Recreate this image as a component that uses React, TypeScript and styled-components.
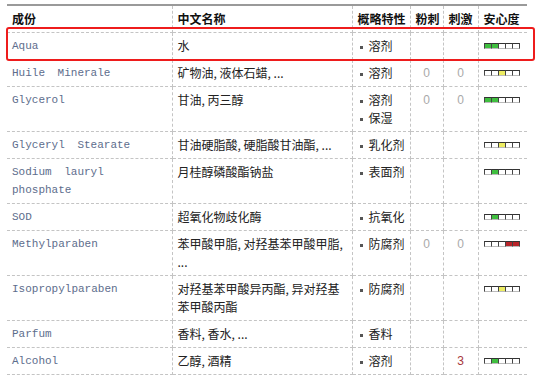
import React from "react";
import styled, { createGlobalStyle } from "styled-components";

const GlobalStyle = createGlobalStyle`
  body {
    margin: 0;
    background: #ffffff;
  }
`;

type Row = {
  en: string[];
  zh: string[];
  props: string[];
  acne: string;
  irr: string;
  safe: string;
};

const rows: Row[] = [
  { en: ["Aqua"], zh: ["水"], props: ["溶剂"], acne: "", irr: "", safe: "gg___" },
  { en: ["Huile Minerale"], zh: ["矿物油, 液体石蜡, ..."], props: ["溶剂"], acne: "0", irr: "0", safe: "__y__" },
  { en: ["Glycerol"], zh: ["甘油, 丙三醇"], props: ["溶剂", "保湿"], acne: "0", irr: "0", safe: "gg___" },
  { en: ["Glyceryl Stearate"], zh: ["甘油硬脂酸, 硬脂酸甘油酯, ..."], props: ["乳化剂"], acne: "", irr: "", safe: "__y__" },
  { en: ["Sodium lauryl", "phosphate"], zh: ["月桂醇磷酸酯钠盐"], props: ["表面剂"], acne: "", irr: "", safe: "_g___" },
  { en: ["SOD"], zh: ["超氧化物歧化酶"], props: ["抗氧化"], acne: "", irr: "", safe: "_g___" },
  { en: ["Methylparaben"], zh: ["苯甲酸甲脂, 对羟基苯甲酸甲脂,", "..."], props: ["防腐剂"], acne: "0", irr: "0", safe: "___rr" },
  { en: ["Isopropylparaben"], zh: ["对羟基苯甲酸异丙酯, 异对羟基", "苯甲酸丙酯"], props: ["防腐剂"], acne: "", irr: "", safe: "__y__" },
  { en: ["Parfum"], zh: ["香料, 香水, ..."], props: ["香料"], acne: "", irr: "", safe: "" },
  { en: ["Alcohol"], zh: ["乙醇, 酒精"], props: ["溶剂"], acne: "", irr: "3", safe: "_g___" },
];

const fills: Record<string, string> = {
  g: "#3fbf3f",
  y: "#eded62",
  r: "#b8242a",
  _: "#ffffff",
};

export default function App() {
  return (
    <Page>
      <GlobalStyle />
      <Table>
        <colgroup>
          <col style={{ width: 165 }} />
          <col style={{ width: 180 }} />
          <col style={{ width: 58 }} />
          <col style={{ width: 33 }} />
          <col style={{ width: 35 }} />
          <col style={{ width: 49 }} />
        </colgroup>
        <thead>
          <tr>
            <Th>成份</Th>
            <Th>中文名称</Th>
            <Th>概略特性</Th>
            <Th>粉刺</Th>
            <Th>刺激</Th>
            <Th>安心度</Th>
          </tr>
        </thead>
        <tbody>
          {rows.map((r, i) => (
            <tr key={i}>
              <EnCell>
                {r.en.map((l, j) => (
                  <div key={j}>{l}</div>
                ))}
              </EnCell>
              <ZhCell>
                {r.zh.map((l, j) => (
                  <div key={j}>{l}</div>
                ))}
              </ZhCell>
              <PropCell>
                {r.props.map((p, j) => (
                  <div key={j}>
                    <Bullet />
                    {p}
                  </div>
                ))}
              </PropCell>
              <NumCell $hot={false}>{r.acne}</NumCell>
              <NumCell $hot={r.irr !== "" && r.irr !== "0"}>{r.irr}</NumCell>
              <SafeCell>
                {r.safe && (
                  <Bar>
                    {r.safe.split("").map((c, j) => (
                      <Box key={j} $fill={fills[c]} $last={j === 4} />
                    ))}
                  </Bar>
                )}
              </SafeCell>
            </tr>
          ))}
        </tbody>
      </Table>
      <Highlight />
    </Page>
  );
}

const Page = styled.div`
  position: relative;
  width: 553px;
  height: 378px;
  padding: 4px 0 0 7px;
  box-sizing: border-box;
  overflow: hidden;
  font-family: "Noto Sans CJK SC", "Liberation Sans", sans-serif;
`;

const Table = styled.table`
  width: 520px;
  table-layout: fixed;
  border-collapse: collapse;
  border-top: 2px solid #9a9a9a;

  td,
  th {
    border-bottom: 1px dashed #c4c4c4;
    border-right: 1px dashed #c4c4c4;
    padding: 4px 4px 4px 5px;
    line-height: 18px;
    vertical-align: top;
    text-align: left;
    white-space: nowrap;
    overflow: hidden;
  }

  td:last-child,
  th:last-child {
    border-right: none;
  }
`;

const Th = styled.th`
  font-size: 12px;
  font-weight: 700;
  color: #111;
`;

const EnCell = styled.td`
  font-family: "Liberation Mono", "Courier New", monospace;
  font-size: 11px;
  word-spacing: 6px;
  color: #5d6d8c;
`;

const ZhCell = styled.td`
  font-size: 12px;
  color: #222;
`;

const PropCell = styled.td`
  font-size: 12px;
  color: #222;
`;

const Bullet = styled.span`
  display: inline-block;
  width: 3px;
  height: 3px;
  margin: 0 6px 0 2px;
  background: #555;
  vertical-align: middle;
`;

const NumCell = styled.td<{ $hot: boolean }>`
  && {
    text-align: center;
    padding-left: 2px;
    padding-right: 2px;
  }
  font-family: "Liberation Sans", Arial, sans-serif;
  font-size: 12px;
  color: ${(p) => (p.$hot ? "#a8383c" : "#a9a9a9")};
`;

const SafeCell = styled.td``;

const Bar = styled.div`
  display: flex;
  margin-top: 6px;
`;

const Box = styled.span<{ $fill: string; $last: boolean }>`
  width: 6px;
  height: 4px;
  background: ${(p) => p.$fill};
  border-top: 1px solid #333;
  border-left: 1px solid #444;
  border-bottom: 1px solid #bbb;
  border-right: ${(p) => (p.$last ? "1px solid #444" : "none")};
`;

const Highlight = styled.div`
  position: absolute;
  left: 6px;
  top: 27px;
  width: 529px;
  height: 34px;
  box-sizing: border-box;
  border: 2px solid #ee1c1c;
  border-radius: 3px;
  pointer-events: none;
`;
